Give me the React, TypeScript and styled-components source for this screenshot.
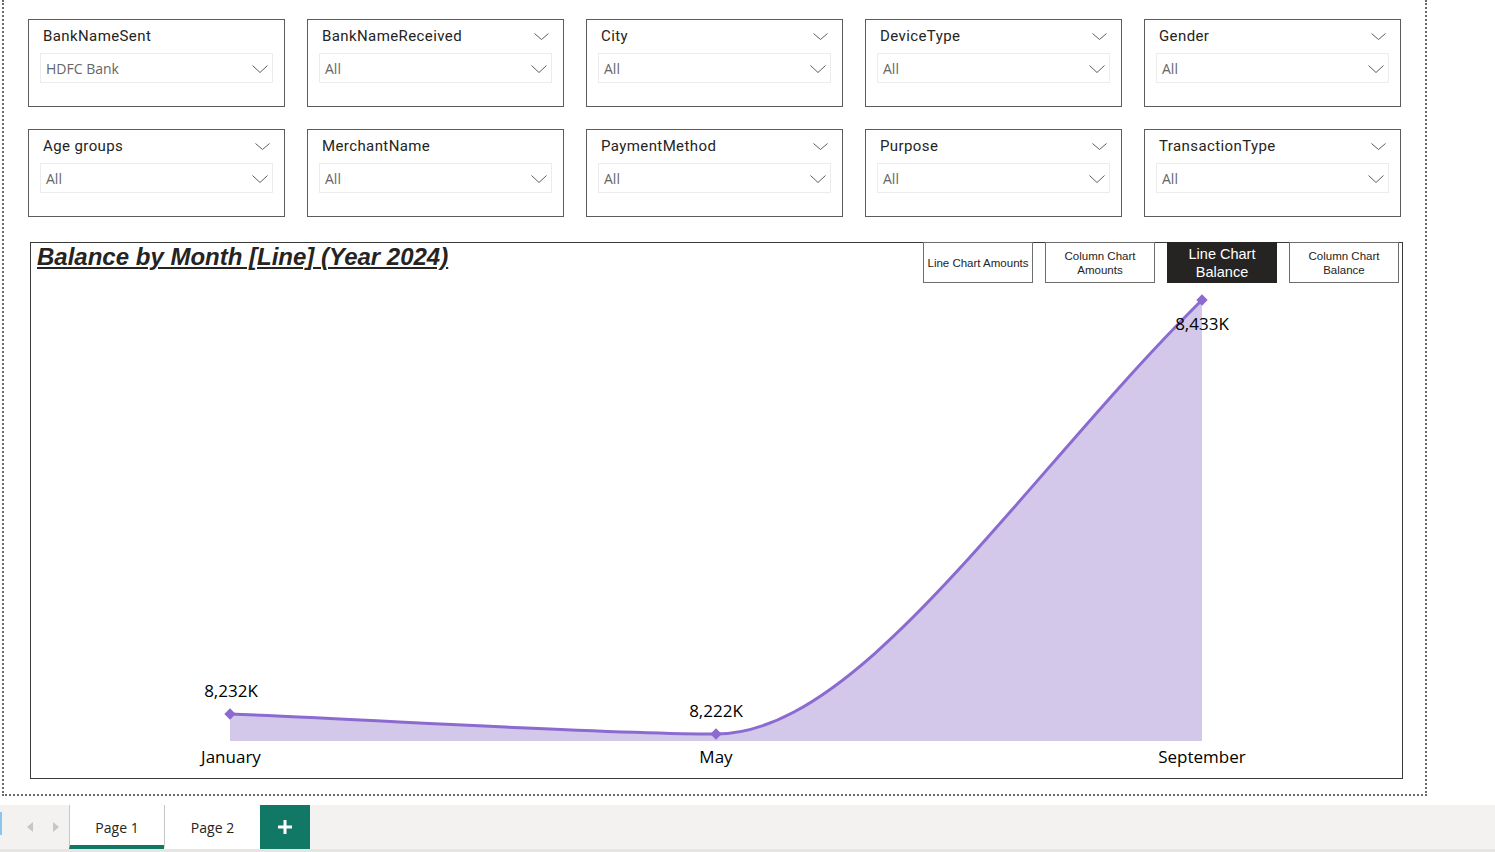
import React from "react";
import styled, { createGlobalStyle } from "styled-components";

const Global = createGlobalStyle`
  html, body { margin: 0; padding: 0; background: #ffffff; }
  body { font-family: "Open Sans", "Noto Sans", sans-serif; color: #252423; }
  * { box-sizing: border-box; }
`;

const Page = styled.div`
  width: 1495px;
  height: 852px;
  display: flex;
  flex-direction: column;
  overflow: hidden;
  background: #ffffff;
`;

const CanvasArea = styled.div`
  height: 805px;
  padding-left: 2px;
`;

const Frame = styled.div`
  width: 1425px;
  height: 796px;
  border: 2px dotted #6a6a6a;
  border-top: none;
  padding: 19px 22px 0 24px;
  display: flex;
  flex-direction: column;
`;

const SlicerGrid = styled.div`
  display: grid;
  grid-template-columns: repeat(5, 257px);
  column-gap: 22px;
  row-gap: 22px;
`;

const SlicerBox = styled.div`
  height: 88px;
  border: 1px solid #5c5c5c;
  background: #fff;
  display: flex;
  flex-direction: column;
`;

const SlicerHeader = styled.div`
  height: 33px;
  display: flex;
  align-items: center;
  justify-content: space-between;
  padding: 0 14px 1px 14px;
`;

const SlicerTitle = styled.span`
  font-family: "Roboto", "Noto Sans", sans-serif;
  font-size: 15px;
  letter-spacing: 0.4px;
  color: #252423;
`;

const Dropdown = styled.div`
  margin: 0 11px;
  height: 30px;
  border: 1px solid #ececec;
  display: flex;
  align-items: center;
  justify-content: space-between;
  padding: 1px 4px 0 5px;
`;

const DropdownValue = styled.span`
  font-family: "Open Sans", "Noto Sans", sans-serif;
  font-size: 14px;
  color: #666666;
`;

const ChevronSvg = styled.svg<{ $hidden?: boolean }>`
  display: block;
  visibility: ${(p) => (p.$hidden ? "hidden" : "visible")};
`;

const Chevron = ({ hidden, w = 16, h = 8 }: { hidden?: boolean; w?: number; h?: number }) => (
  <ChevronSvg $hidden={hidden} width={w} height={h} viewBox={`0 0 ${w} ${h}`}>
    <polyline
      points={`0.5,0.5 ${w / 2},${h - 0.5} ${w - 0.5},0.5`}
      fill="none"
      stroke="#605e5c"
      strokeWidth="1"
    />
  </ChevronSvg>
);

const ChartCard = styled.div`
  margin-top: 25px;
  margin-left: 2px;
  width: 1373px;
  height: 537px;
  border: 1px solid #3a3a3a;
  display: flex;
  flex-direction: column;
`;

const ChartHeader = styled.div`
  height: 40px;
  display: flex;
  justify-content: space-between;
  align-items: flex-start;
`;

const ChartTitle = styled.h1`
  margin: 0 0 0 6px;
  font-family: "Liberation Sans", Arial, sans-serif;
  font-size: 24px;
  line-height: 28px;
  font-weight: bold;
  font-style: italic;
  text-decoration: underline;
  text-decoration-thickness: 1.5px;
  text-underline-offset: 2px;
  color: #252423;
`;

const ButtonRow = styled.div`
  display: flex;
  gap: 12px;
  margin: -1px 3px 0 0;
`;

const ChartButton = styled.div<{ $active?: boolean; $big?: boolean }>`
  width: 110px;
  height: 41px;
  display: flex;
  align-items: center;
  justify-content: center;
  text-align: center;
  font-family: "Liberation Sans", Arial, sans-serif;
  font-size: ${(p) => (p.$big ? "14.5px" : "11.5px")};
  line-height: ${(p) => (p.$big ? "18px" : "14px")};
  background: ${(p) => (p.$active ? "#252423" : "#ffffff")};
  color: ${(p) => (p.$active ? "#ffffff" : "#252423")};
  border: 1px solid ${(p) => (p.$active ? "#252423" : "#6e6e6e")};
`;

const ChartSvg = styled.svg`
  display: block;
  flex: 1;
`;

const TabBar = styled.div`
  height: 47px;
  background: #f3f2f1;
  display: flex;
  align-items: stretch;
  border-bottom: 3px solid #e6e5e4;
`;

const NavArea = styled.div`
  width: 69px;
  position: relative;
  display: flex;
  align-items: center;
  padding-left: 27px;
  gap: 20px;
`;

const BlueMark = styled.div`
  position: absolute;
  left: 0;
  top: 7px;
  width: 2px;
  height: 23px;
  background: #8cc4f0;
`;

const Tab = styled.div<{ $active?: boolean; $w: number }>`
  width: ${(p) => p.$w}px;
  background: #ffffff;
  border-left: 1px solid #c8c6c4;
  border-bottom: 4px solid ${(p) => (p.$active ? "#117865" : "#ffffff")};
  display: flex;
  align-items: center;
  justify-content: center;
  padding-top: 4px;
  font-family: "Open Sans", "Noto Sans", sans-serif;
  font-size: 14px;
  color: #252423;
`;

const AddTab = styled.div`
  width: 50px;
  background: #117865;
  display: flex;
  align-items: center;
  justify-content: center;
`;

const slicers = [
  { title: "BankNameSent", value: "HDFC Bank", noHead: true },
  { title: "BankNameReceived", value: "All" },
  { title: "City", value: "All" },
  { title: "DeviceType", value: "All" },
  { title: "Gender", value: "All" },
  { title: "Age groups", value: "All" },
  { title: "MerchantName", value: "All", noHead: true },
  { title: "PaymentMethod", value: "All" },
  { title: "Purpose", value: "All" },
  { title: "TransactionType", value: "All" },
];

const LINE = "#8b6bcf";
const FILL = "#d3c7ea";

const Diamond = ({ x, y }: { x: number; y: number }) => (
  <rect x={x - 4} y={y - 4} width={8} height={8} fill={LINE} transform={`rotate(45 ${x} ${y})`} />
);

const curve =
  "M230,714 C380,720 600,734 716,734 C860,734 1020,480 1202,300";

export default function App() {
  return (
    <Page>
      <Global />
      <CanvasArea>
        <Frame>
          <SlicerGrid>
            {slicers.map((s) => (
              <SlicerBox key={s.title}>
                <SlicerHeader>
                  <SlicerTitle>{s.title}</SlicerTitle>
                  <Chevron hidden={s.noHead} w={15} h={7} />
                </SlicerHeader>
                <Dropdown>
                  <DropdownValue>{s.value}</DropdownValue>
                  <Chevron />
                </Dropdown>
              </SlicerBox>
            ))}
          </SlicerGrid>
          <ChartCard>
            <ChartHeader>
              <ChartTitle>Balance by Month [Line] (Year 2024)</ChartTitle>
              <ButtonRow>
                <ChartButton>Line Chart Amounts</ChartButton>
                <ChartButton>
                  Column Chart
                  <br />
                  Amounts
                </ChartButton>
                <ChartButton $active $big>
                  Line Chart
                  <br />
                  Balance
                </ChartButton>
                <ChartButton>
                  Column Chart
                  <br />
                  Balance
                </ChartButton>
              </ButtonRow>
            </ChartHeader>
            <ChartSvg width={1371} height={495} viewBox="31 283 1371 495">
              <path d={`${curve} L1202,741 L230,741 Z`} fill={FILL} />
              <path d={curve} fill="none" stroke={LINE} strokeWidth={3} />
              <Diamond x={230} y={714} />
              <Diamond x={716} y={734} />
              <Diamond x={1202} y={300} />
              <g
                fontFamily="'Open Sans', 'Noto Sans', sans-serif"
                fontSize="17"
                fill="#000"
                textAnchor="middle"
              >
                <text x={231} y={697}>8,232K</text>
                <text x={716} y={717}>8,222K</text>
                <text x={1202} y={330}>8,433K</text>
                <text x={231} y={763}>January</text>
                <text x={716} y={763}>May</text>
                <text x={1202} y={763}>September</text>
              </g>
            </ChartSvg>
          </ChartCard>
        </Frame>
      </CanvasArea>
      <TabBar>
        <NavArea>
          <BlueMark />
          <svg width="6" height="10" viewBox="0 0 6 10">
            <polygon points="6,0 0,5 6,10" fill="#c8c6c4" />
          </svg>
          <svg width="6" height="10" viewBox="0 0 6 10">
            <polygon points="0,0 6,5 0,10" fill="#c8c6c4" />
          </svg>
        </NavArea>
        <Tab $active $w={95}>Page 1</Tab>
        <Tab $w={96}>Page 2</Tab>
        <AddTab>
          <svg width="14" height="14" viewBox="0 0 14 14">
            <rect x="5.5" y="0" width="3" height="14" fill="#fff" />
            <rect x="0" y="5.5" width="14" height="3" fill="#fff" />
          </svg>
        </AddTab>
      </TabBar>
    </Page>
  );
}
